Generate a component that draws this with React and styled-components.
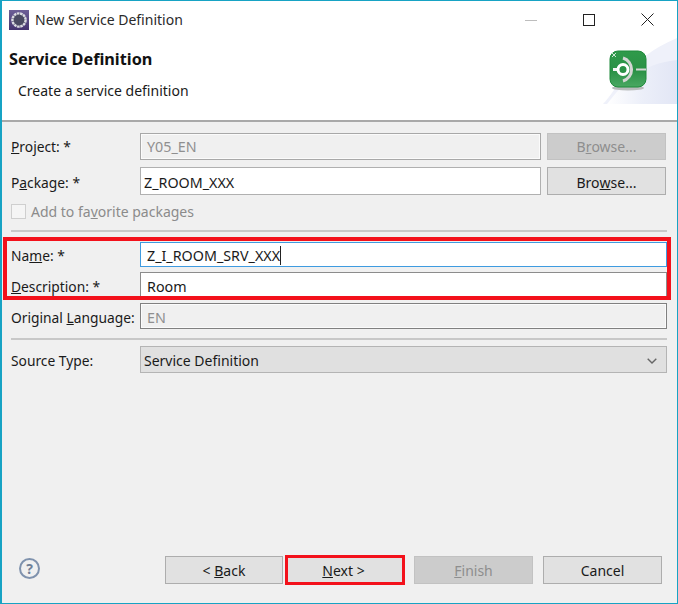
import React from 'react'
import styled, { createGlobalStyle } from 'styled-components'

const Global = createGlobalStyle`
  html, body { margin: 0; padding: 0; background: #f0f0f0; }
`

const Window = styled.div`
  box-sizing: border-box;
  width: 678px;
  height: 604px;
  display: flex;
  flex-direction: column;
  background: #f0f0f0;
  border: 1px solid #17a3c4;
  border-left-width: 2px;
  font-family: "Noto Sans", "Open Sans", sans-serif;
  font-size: 14px;
  color: #1a1a1a;
  overflow: hidden;
`

const TitleBar = styled.div`
  height: 37px;
  display: flex;
  align-items: center;
  background: #fff;
  padding-left: 7px;
  flex-shrink: 0;
`

const TitleText = styled.span`
  margin-left: 6px;
  font-size: 14px;
  color: #2a2a2a;
`

const WindowButtons = styled.div`
  margin-left: auto;
  display: flex;
  align-items: center;
  padding-right: 1px;
`

const WindowButton = styled.div`
  width: 58px;
  height: 37px;
  display: flex;
  align-items: center;
  justify-content: center;
`

const Banner = styled.div`
  position: relative;
  height: 82px;
  flex-shrink: 0;
  background: #fff;
  border-bottom: 2px solid #a9a9a9;
`

const BannerTitle = styled.div`
  padding: 11px 0 0 7px;
  font-weight: 700;
  font-size: 16.3px;
  line-height: 20px;
  color: #111;
`

const BannerText = styled.div`
  padding: 12px 0 0 16px;
  font-size: 14px;
  line-height: 20px;
`

const BannerArt = styled.svg`
  position: absolute;
  top: 0;
  right: 0;
`

const Form = styled.div`
  flex: 1;
  display: flex;
  flex-direction: column;
  padding: 11px 9px 0;
`

const Row = styled.div`
  display: grid;
  grid-template-columns: ${p => (p.$button ? '123px 401px 119px' : '129px 527px')};
  column-gap: ${p => (p.$button ? '6px' : '0')};
  align-items: stretch;
  height: ${p => p.$h}px;
  margin-top: ${p => p.$mt || 0}px;

  & > div {
    padding-top: ${p => p.$nudge || 0}px;
  }
`

const Label = styled.div`
  box-sizing: border-box;
  display: flex;
  align-items: center;
  font-size: 13.8px;
  white-space: pre;
`

const Field = styled.div`
  box-sizing: border-box;
  height: 100%;
  display: flex;
  align-items: center;
  padding-left: ${p => p.$pad}px;
  background: ${p => (p.$disabled ? '#f0f0f0' : '#fff')};
  color: ${p => (p.$disabled ? '#8f8f8f' : '#1a1a1a')};
  border: 1px solid ${p => p.$line || '#a6a6a6'};
  box-shadow: ${p => (p.$disabled ? 'inset 0 0 0 1px #fbfbfb' : 'none')};
  font-size: 14.3px;
  white-space: nowrap;
`

const Caret = styled.span`
  display: inline-block;
  width: 1px;
  height: 19px;
  background: #222;
`

const Check = styled.div`
  width: 15px;
  height: 15px;
  box-sizing: border-box;
  background: #f5f5f5;
  border: 1px solid #cfcfcf;
`

const CheckRow = styled.div`
  display: flex;
  align-items: center;
  gap: 5px;
  margin-top: 9px;
  height: 15px;
  color: #8b8b8b;
`

const Separator = styled.div`
  height: 2px;
  background: #c8c8c8;
  margin-top: ${p => p.$mt}px;
  width: 656px;
`

const Highlighted = styled.div`
  position: relative;
`

const Highlight = styled.div`
  position: absolute;
  top: ${p => p.$t}px;
  left: ${p => p.$l}px;
  right: ${p => p.$r}px;
  bottom: ${p => p.$b}px;
  border: ${p => p.$w || 3}px solid #f3111b;
  pointer-events: none;
`

const Select = styled.div`
  box-sizing: border-box;
  height: 100%;
  display: flex;
  align-items: center;
  justify-content: space-between;
  padding: 0 9px 0 3px;
  background: #e0e0e0;
  border: 1.5px solid #b4b4b4;
`

const Button = styled.div`
  position: relative;
  box-sizing: border-box;
  width: ${p => p.$w || 119}px;
  height: ${p => p.$h || 28}px;
  display: flex;
  align-items: center;
  justify-content: center;
  background: ${p => (p.$disabled ? '#cccccc' : '#e1e1e1')};
  color: ${p => (p.$disabled ? '#8e8e8e' : '#1a1a1a')};
  border: 1.5px solid ${p => (p.$disabled ? '#c2c2c2' : '#adadad')};
  margin-left: ${p => p.$ml || 0}px;
  white-space: pre;
`

const NextText = styled.span`
  margin-right: 3px;
`

const Footer = styled.div`
  height: 47px;
  flex-shrink: 0;
  display: flex;
  align-items: flex-start;
  padding: 0 15px 0 17px;
`

const Help = styled.div`
  box-sizing: border-box;
  width: 21px;
  height: 21px;
  margin-top: 2px;
  border-radius: 50%;
  border: 2px solid #7f92ad;
  display: flex;
  align-items: center;
  justify-content: center;
  color: #6f7f97;
  font-weight: 700;
  font-size: 14px;
  line-height: 1;
`

const FooterButtons = styled.div`
  margin-left: auto;
  display: flex;
`

const EclipseIcon = () => (
  <svg width="20" height="20" viewBox="0 0 20 20">
    <defs>
      <linearGradient id="ec" x1="0" y1="0" x2="0" y2="1">
        <stop offset="0" stopColor="#6d5f97" />
        <stop offset="1" stopColor="#44336f" />
      </linearGradient>
    </defs>
    <rect width="20" height="20" fill="url(#ec)" />
    <circle cx="10" cy="10" r="6.6" fill="#4a4a62" stroke="#dcdce2" strokeWidth="2.4" strokeDasharray="2.6 .6" />
  </svg>
)

const GreenArt = () => (
  <BannerArt width="74" height="66" viewBox="0 0 74 66">
    <defs>
      <linearGradient id="wash" x1="0" y1="0" x2="1" y2="0">
        <stop offset="0" stopColor="#ffffff" />
        <stop offset=".5" stopColor="#eceff9" />
        <stop offset="1" stopColor="#e2e6f5" />
      </linearGradient>
      <linearGradient id="gr" x1="0" y1="0" x2="0" y2="1">
        <stop offset="0" stopColor="#2f9a4a" />
        <stop offset=".55" stopColor="#2a9146" />
        <stop offset="1" stopColor="#4aa862" />
      </linearGradient>
    </defs>
    <path d="M0 66 C14 52 26 20 74 0 V66 Z" fill="#eff1fa" />
    <path d="M4 66 C20 46 36 26 74 22 V66 Z" fill="url(#wash)" />
    <ellipse cx="25" cy="50" rx="16" ry="2.5" fill="#b9bcbc" />
    <rect x="7" y="13" width="36" height="36" rx="8" fill="url(#gr)" stroke="#1e8a3b" strokeWidth="1" />
    <path d="M20 20 A12 12 0 0 1 20 43" fill="none" stroke="#d4d6d4" strokeWidth="3" />
    <path d="M33 31.5 H43" stroke="#d4d6d4" strokeWidth="2" />
    <path d="M10 31.5 H15" stroke="#f4f4f4" strokeWidth="3" />
    <circle cx="20" cy="31.5" r="5" fill="#2a9146" stroke="#fff" strokeWidth="3" />
    <path d="M9 15 L13 19 M13 15 L9 19" stroke="#cfe6d4" strokeWidth="1" />
  </BannerArt>
)

export default function App() {
  return (
    <>
      <Global />
      <Window>
        <TitleBar>
          <EclipseIcon />
          <TitleText>New Service Definition</TitleText>
          <WindowButtons>
            <WindowButton>
              <svg width="12" height="12" viewBox="0 0 12 12"><path d="M0 6.5 H12" stroke="#bdbdbd" strokeWidth="1" /></svg>
            </WindowButton>
            <WindowButton>
              <svg width="12" height="12" viewBox="0 0 12 12"><rect x=".5" y=".5" width="11" height="11" fill="none" stroke="#222" strokeWidth="1" /></svg>
            </WindowButton>
            <WindowButton>
              <svg width="13" height="13" viewBox="0 0 13 13"><path d="M.5 .5 L12.5 12.5 M12.5 .5 L.5 12.5" stroke="#222" strokeWidth="1" /></svg>
            </WindowButton>
          </WindowButtons>
        </TitleBar>
        <Banner>
          <BannerTitle>Service Definition</BannerTitle>
          <BannerText>Create a service definition</BannerText>
          <GreenArt />
        </Banner>
        <Form>
          <Row $button $h={27}>
            <Label><u>P</u>roject: *</Label>
            <Field $disabled $pad={6} $line="#a8a8a8">Y05_EN</Field>
            <Button $disabled $h={27}>B<u>r</u>owse...</Button>
          </Row>
          <Row $button $h={28} $mt={7} $nudge={2}>
            <Label>P<u>a</u>ckage: *</Label>
            <Field $pad={3} $line="#b0b0b0">Z_ROOM_XXX</Field>
            <Button>Bro<u>w</u>se...</Button>
          </Row>
          <CheckRow>
            <Check />
            <span>Add to fa<u>v</u>orite packages</span>
          </CheckRow>
          <Separator $mt={11} />
          <Highlighted>
            <Row $h={25} $mt={10} $nudge={2}>
              <Label>Na<u>m</u>e: *</Label>
              <Field $pad={6} $line="#3f9be0">Z_I_ROOM_SRV_XXX<Caret /></Field>
            </Row>
            <Row $h={25} $mt={5} $nudge={3}>
              <Label><u>D</u>escription: *</Label>
              <Field $pad={6} $line="#8c8c8c">Room</Field>
            </Row>
            <Highlight $t={5} $l={-8} $r={-3} $b={-3} $w={4} />
          </Highlighted>
          <Row $h={26} $mt={6} $nudge={3}>
            <Label>Original <u>L</u>anguage:</Label>
            <Field $disabled $pad={6} $line="#808080">EN</Field>
          </Row>
          <Separator $mt={9} />
          <Row $h={27} $mt={6} $nudge={2}>
            <Label>Source Type:</Label>
            <Select>
              <span>Service Definition</span>
              <svg width="10" height="6" viewBox="0 0 10 6"><path d="M.7 .7 L5 5 L9.3 .7" fill="none" stroke="#666" strokeWidth="1.4" /></svg>
            </Select>
          </Row>
        </Form>
        <Footer>
          <Help>?</Help>
          <FooterButtons>
            <Button $w={118}>{'< '}<u>B</u>ack</Button>
            <Button $ml={3} $w={118}>
              <NextText><u>N</u>ext {'>'}</NextText>
              <Highlight $t={-2} $l={-2} $r={-2} $b={-2} $w={3.5} />
            </Button>
            <Button $disabled $ml={10}><span><u>F</u>inish</span></Button>
            <Button $ml={10}>Cancel</Button>
          </FooterButtons>
        </Footer>
      </Window>
    </>
  )
}
